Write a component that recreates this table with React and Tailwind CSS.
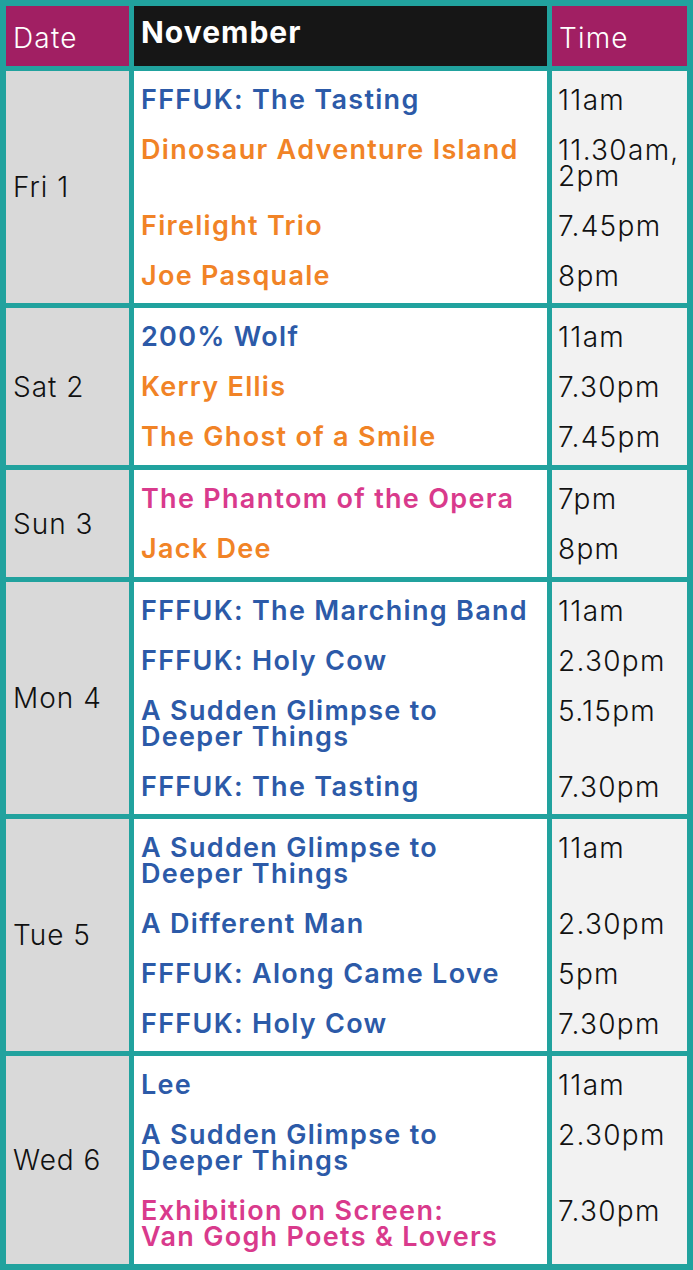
import React from "react";

const BLUE = "text-[#2c5aa8]";
const ORANGE = "text-[#f18326]";
const PINK = "text-[#d93a8c]";

const groups = [
  {
    date: "Fri 1",
    h: "h-[232px]",
    rows: [
      { t: ["FFFUK: The Tasting"], c: BLUE, time: ["11am"] },
      { t: ["Dinosaur Adventure Island"], c: ORANGE, time: ["11.30am,", "2pm"] },
      { t: ["Firelight Trio"], c: ORANGE, time: ["7.45pm"] },
      { t: ["Joe Pasquale"], c: ORANGE, time: ["8pm"] },
    ],
  },
  {
    date: "Sat 2",
    h: "h-[157px]",
    rows: [
      { t: ["200% Wolf"], c: BLUE, time: ["11am"] },
      { t: ["Kerry Ellis"], c: ORANGE, time: ["7.30pm"] },
      { t: ["The Ghost of a Smile"], c: ORANGE, time: ["7.45pm"] },
    ],
  },
  {
    date: "Sun 3",
    h: "h-[107px]",
    rows: [
      { t: ["The Phantom of the Opera"], c: PINK, time: ["7pm"] },
      { t: ["Jack Dee"], c: ORANGE, time: ["8pm"] },
    ],
  },
  {
    date: "Mon 4",
    h: "h-[232px]",
    rows: [
      { t: ["FFFUK: The Marching Band"], c: BLUE, time: ["11am"] },
      { t: ["FFFUK: Holy Cow"], c: BLUE, time: ["2.30pm"] },
      { t: ["A Sudden Glimpse to", "Deeper Things"], c: BLUE, time: ["5.15pm"] },
      { t: ["FFFUK: The Tasting"], c: BLUE, time: ["7.30pm"] },
    ],
  },
  {
    date: "Tue 5",
    h: "h-[232px]",
    rows: [
      { t: ["A Sudden Glimpse to", "Deeper Things"], c: BLUE, time: ["11am"] },
      { t: ["A Different Man"], c: BLUE, time: ["2.30pm"] },
      { t: ["FFFUK: Along Came Love"], c: BLUE, time: ["5pm"] },
      { t: ["FFFUK: Holy Cow"], c: BLUE, time: ["7.30pm"] },
    ],
  },
  {
    date: "Wed 6",
    h: "h-[208px]",
    rows: [
      { t: ["Lee"], c: BLUE, time: ["11am"] },
      { t: ["A Sudden Glimpse to", "Deeper Things"], c: BLUE, time: ["2.30pm"] },
      { t: ["Exhibition on Screen:", "Van Gogh Poets & Lovers"], c: PINK, time: ["7.30pm"] },
    ],
  },
];

function rowH(r) {
  return r.t.length > 1 || r.time.length > 1 ? "h-[76px]" : "h-[50px]";
}

export default function App() {
  return (
    <div
      className="w-[693px] h-[1270px] bg-[#21a29e] p-[6px] flex flex-col gap-[5px]"
      style={{ fontFamily: "Inter, 'Liberation Sans', sans-serif" }}
    >
      <div className="flex gap-[5px] h-[60px]">
        <div className="w-[123px] bg-[#a11f63] text-white text-[28px] font-light px-[7px] pt-[17px] leading-[30px] tracking-[1.2px]">
          Date
        </div>
        <div className="w-[413px] bg-[#161616] text-white text-[30px] font-bold px-[7px] pt-[11px] leading-[30px] tracking-[1px]">
          November
        </div>
        <div className="w-[135px] bg-[#a11f63] text-white text-[28px] font-light px-[7px] pt-[17px] leading-[30px] tracking-[1.2px]">
          Time
        </div>
      </div>
      {groups.map((g) => (
        <div key={g.date} className={`flex gap-[5px] ${g.h}`}>
          <div className="w-[123px] bg-[#d9d9d9] flex items-center px-[7px] text-[28px] font-light text-[#111] tracking-[1px]">
            {g.date}
          </div>
          <div className="w-[413px] bg-white flex flex-col pt-[4px] px-[7px]">
            {g.rows.map((r, i) => (
              <div
                key={i}
                className={`${rowH(r)} pt-[12px] leading-[26px] text-[27px] font-semibold tracking-[1.3px] ${r.c}`}
              >
                {r.t.map((l, j) => (
                  <div key={j} className="whitespace-nowrap">{l}</div>
                ))}
              </div>
            ))}
          </div>
          <div className="w-[135px] bg-[#f2f2f2] flex flex-col pt-[4px] px-[6px]">
            {g.rows.map((r, i) => (
              <div
                key={i}
                className={`${rowH(r)} pt-[12px] leading-[26px] text-[28px] font-light text-[#111] tracking-[1.3px]`}
              >
                {r.time.map((l, j) => (
                  <div key={j} className="whitespace-nowrap">{l}</div>
                ))}
              </div>
            ))}
          </div>
        </div>
      ))}
    </div>
  );
}
